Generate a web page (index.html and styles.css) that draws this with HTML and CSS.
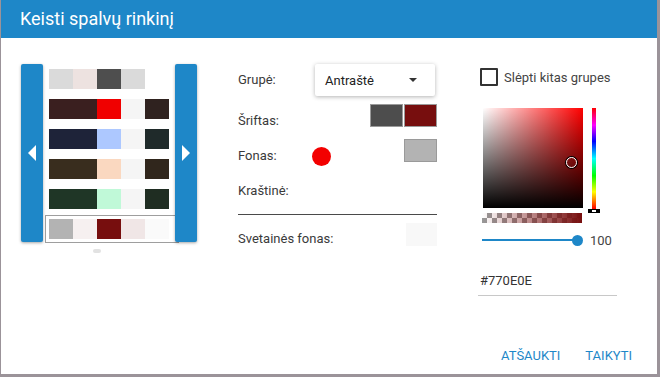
FILE: index.html
```html
<!DOCTYPE html>
<html lang="lt">
  <head>
    <meta charset="UTF-8" />
    <title>Keisti spalvų rinkinį</title>
    <link rel="stylesheet" href="styles.css">
  </head>
  <body>
    <div class="dialog">
      <div class="dialog_title">Keisti spalvų rinkinį</div>

      <div class="dialog_body">
        <!-- rinkinių karuselė -->
        <div class="carousel_col">
          <div class="carousel">
            <div class="nav_btn">
              <svg width="8" height="16" viewBox="0 0 8 16"><path d="M8 0 L0 8 L8 16 Z" fill="#fff"/></svg>
            </div>
            <div class="sets">
              <div class="set">
                <span style="background:#dadada"></span><span style="background:#ede2e0"></span><span style="background:#4e4e4e"></span><span style="background:#dadada"></span><span></span>
              </div>
              <div class="set">
                <span style="background:#3a1f1f"></span><span style="background:#3a1f1f"></span><span style="background:#f00000"></span><span style="background:#f5f5f5"></span><span style="background:#2f221f"></span>
              </div>
              <div class="set">
                <span style="background:#1e2339"></span><span style="background:#1e2339"></span><span style="background:#adc8ff"></span><span style="background:#f5f5f5"></span><span style="background:#1f2a2a"></span>
              </div>
              <div class="set">
                <span style="background:#392d1e"></span><span style="background:#392d1e"></span><span style="background:#fad8c0"></span><span style="background:#f5f5f5"></span><span style="background:#30261c"></span>
              </div>
              <div class="set">
                <span style="background:#1f3626"></span><span style="background:#1f3626"></span><span style="background:#c0f9d8"></span><span style="background:#f5f5f5"></span><span style="background:#1f2d22"></span>
              </div>
              <div class="set selected">
                <span style="background:#b3b3b3"></span><span style="background:#f6f0f0"></span><span style="background:#770e0e"></span><span style="background:#f0e6e6"></span><span style="background:#fafafa"></span>
              </div>
            </div>
            <div class="nav_btn">
              <svg width="8" height="16" viewBox="0 0 8 16"><path d="M0 0 L8 8 L0 16 Z" fill="#fff"/></svg>
            </div>
          </div>
          <div class="pager"></div>
        </div>

        <!-- grupės spalvos -->
        <div class="form">
          <div class="row row_group">
            <span class="label">Grupė:</span>
            <div class="select">
              <span>Antraštė</span>
              <svg width="8" height="4" viewBox="0 0 8 4"><path d="M0 0 L8 0 L4 4 Z" fill="#333"/></svg>
            </div>
          </div>
          <div class="row row_font">
            <span class="label">Šriftas:</span>
            <div class="swatches">
              <span class="swatch" style="background:#4d4d4d"></span>
              <span class="swatch" style="background:#770e0e"></span>
            </div>
          </div>
          <div class="row row_bg">
            <span class="label">Fonas:</span>
            <span class="dot"></span>
            <div class="swatches">
              <span class="swatch" style="background:#b3b3b3"></span>
            </div>
          </div>
          <div class="row row_border">
            <span class="label">Kraštinė:</span>
          </div>
          <div class="row row_site">
            <span class="label">Svetainės fonas:</span>
            <div class="swatches">
              <span class="swatch light" style="background:#f8f8f8"></span>
            </div>
          </div>
        </div>

        <!-- spalvos parinkiklis -->
        <div class="picker_col">
          <label class="check">
            <span class="box"></span>
            <span>Slėpti kitas grupes</span>
          </label>
          <div class="picker">
            <div class="sat">
              <span class="sat_cursor"></span>
            </div>
            <div class="hue_col">
              <div class="hue"></div>
              <div class="hue_ptr"></div>
            </div>
          </div>
          <div class="alpha"></div>
          <div class="slider">
            <div class="track"><span class="thumb"></span></div>
            <span class="value">100</span>
          </div>
          <div class="hex">#770E0E</div>
        </div>
      </div>

      <div class="dialog_actions">
        <span class="btn">Atšaukti</span>
        <span class="btn">Taikyti</span>
      </div>
    </div>
  </body>
</html>
```

FILE: styles.css
```css
* {
  margin: 0;
  padding: 0;
  box-sizing: border-box;
}
body {
  background: #9b9399;
  font-family: Roboto, "Liberation Sans", sans-serif;
  color: #3a3a3a;
  font-size: 13px;
}
.dialog {
  display: flex;
  flex-direction: column;
  width: 656px;
  height: 374px;
  margin-left: 1px;
  background: #fff;
}
.dialog_title {
  height: 38px;
  line-height: 38px;
  padding-left: 19px;
  background: #1e87c8;
  color: #fff;
  font-size: 18px;
}
.dialog_body {
  display: flex;
  padding: 26px 0 0 20px;
}

/* karuselė */
.carousel_col {
  display: flex;
  flex-direction: column;
  width: 176px;
}
.carousel {
  display: flex;
  height: 178px;
}
.nav_btn {
  display: flex;
  align-items: center;
  justify-content: center;
  width: 22px;
  height: 178px;
  background: #1e87c8;
  border-radius: 2px;
  box-shadow: 0 1px 3px rgba(0, 0, 0, 0.35);
}
.sets {
  display: flex;
  flex-direction: column;
  gap: 10px;
  width: 132px;
  padding: 5px 0 0 6px;
}
.set {
  display: flex;
  height: 20px;
}
.set span {
  width: 24px;
  height: 20px;
}
.set.selected {
  outline: 1px solid #9e9e9e;
  outline-offset: 3px;
}
.pager {
  width: 8px;
  height: 4px;
  margin: 7px 0 0 72px;
  background: #e2e2e2;
  border-radius: 2px;
}

/* forma */
.form {
  display: flex;
  flex-direction: column;
  width: 199px;
  margin-left: 41px;
}
.row {
  display: flex;
  align-items: flex-end;
}
.label {
  width: 77px;
  line-height: 16px;
  flex-shrink: 0;
  white-space: nowrap;
}
.row_group {
  height: 32px;
  align-items: center;
}
.select {
  display: flex;
  align-items: center;
  justify-content: space-between;
  width: 120px;
  height: 32px;
  padding: 0 18px 0 10px;
  box-shadow: 0 1px 4px rgba(0, 0, 0, 0.3);
  border-radius: 2px;
  color: #222;
}
.swatches {
  display: flex;
  gap: 1px;
  margin-left: auto;
  align-self: flex-start;
}
.swatch {
  width: 33px;
  height: 23px;
  border: 1px solid #9a9a9a;
}
.swatch.light {
  width: 31px;
  border-color: #f8f8f8;
}
.row_font {
  height: 23px;
  margin-top: 8px;
}
.row_font .label,
.row_bg .label,
.row_site .label {
  margin-bottom: -2px;
}
.row_bg {
  height: 23px;
  margin-top: 12px;
}
.dot {
  width: 19px;
  height: 19px;
  margin: 0 0 -4px -3px;
  border-radius: 50%;
  background: #f30000;
}
.row_border {
  height: 53px;
  padding-bottom: 15px;
  border-bottom: 1px solid #4a4a4a;
}
.row_site {
  height: 22px;
  margin-top: 8px;
}

/* parinkiklis */
.picker_col {
  display: flex;
  flex-direction: column;
  margin-left: 43px;
  width: 140px;
}
.check {
  display: flex;
  align-items: center;
  gap: 6px;
  height: 18px;
  margin-top: 4px;
  color: #444;
}
.box {
  width: 18px;
  height: 18px;
  border: 2px solid #333;
  border-radius: 1px;
}
.picker {
  display: flex;
  margin: 22px 0 0 3px;
}
.sat {
  position: relative;
  width: 100px;
  height: 100px;
  background: linear-gradient(to top, #000, rgba(0, 0, 0, 0)),
    linear-gradient(to right, #fff, rgba(255, 255, 255, 0)), #f00;
}
.sat_cursor {
  position: absolute;
  left: 83px;
  top: 49px;
  width: 11px;
  height: 11px;
  border: 1.5px solid #fff;
  border-radius: 50%;
  box-shadow: 0 0 0 1px #000;
}
.hue_col {
  display: flex;
  flex-direction: column;
  align-items: center;
  margin-left: 5px;
  width: 12px;
}
.hue {
  width: 4px;
  height: 101px;
  background: linear-gradient(to bottom, #f00, #f0f 17%, #00f 33%, #0ff 50%, #0f0 67%, #ff0 83%, #f00);
}
.hue_ptr {
  width: 12px;
  height: 4px;
  border-left: 4px solid #000;
  border-right: 4px solid #000;
  border-top: 1px solid #000;
  border-bottom: 1px solid #000;
  background-color: #fff;
}
.alpha {
  width: 100px;
  height: 10px;
  margin: 0 0 0 2px;
  background: linear-gradient(to right, rgba(119, 14, 14, 0), #770e0e),
    repeating-conic-gradient(#999 0 25%, #fff 0 50%) 0 0 / 10px 10px;
}
.slider {
  display: flex;
  align-items: center;
  margin: 12px 0 0 2px;
  height: 10px;
}
.track {
  display: flex;
  align-items: center;
  justify-content: flex-end;
  width: 96px;
  height: 2px;
  background: #1e87c8;
}
.thumb {
  width: 11px;
  height: 11px;
  margin-right: -5px;
  border-radius: 50%;
  background: #1e87c8;
}
.value {
  margin-left: 12px;
  font-size: 13px;
  color: #444;
}
.hex {
  margin-top: 28px;
  width: 139px;
  margin-left: -2px;
  padding: 0 0 6px 2px;
  line-height: 16px;
  border-bottom: 1px solid #c8c8c8;
  color: #333;
}

/* mygtukai */
.dialog_actions {
  display: flex;
  justify-content: flex-end;
  gap: 25px;
  margin-top: auto;
  padding: 0 25px 10px 0;
}
.btn {
  text-transform: uppercase;
  color: #1e87c8;
  font-size: 13px;
  line-height: 16px;
}
```
